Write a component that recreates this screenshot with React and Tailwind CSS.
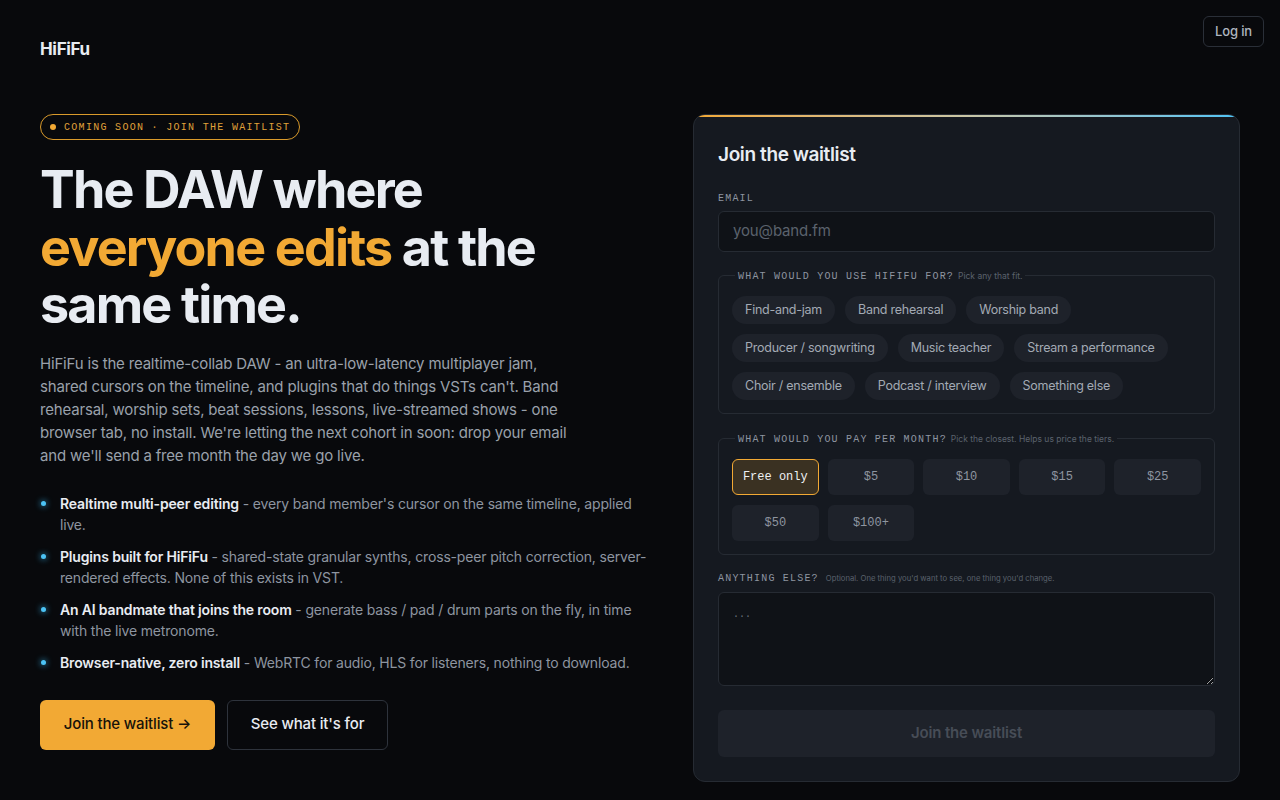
import React from "react";

const mono = { fontFamily: '"Liberation Mono", "DejaVu Sans Mono", monospace' };

const uses = [
  ["Find-and-jam", "Band rehearsal", "Worship band"],
  ["Producer / songwriting", "Music teacher", "Stream a performance"],
  ["Choir / ensemble", "Podcast / interview", "Something else"],
];
const prices = ["Free only", "$5", "$10", "$15", "$25", "$50", "$100+"];

const features = [
  ["Realtime multi-peer editing", "every band member's cursor on the same timeline, applied live."],
  ["Plugins built for HiFiFu", "shared-state granular synths, cross-peer pitch correction, server-rendered effects. None of this exists in VST."],
  ["An AI bandmate that joins the room", "generate bass / pad / drum parts on the fly, in time with the live metronome."],
  ["Browser-native, zero install", "WebRTC for audio, HLS for listeners, nothing to download."],
];

export default function App() {
  return (
    <div
      className="relative min-h-screen bg-[#08090c] text-[#e8ecf2]"
      style={{ fontFamily: 'Inter, "Noto Sans", sans-serif' }}
    >
      <button className="absolute right-4 top-4 h-[31px] rounded-md border border-[#2a2f38] px-[11px] text-[13px] font-medium tracking-[-0.01em] text-[#aeb5bf]">
        Log in
      </button>
      <header className="flex h-[98px] items-center px-10 pt-[2px]">
        <div className="text-[17px] font-bold tracking-[-0.02em] text-[#e8ecf2]">HiFiFu</div>
      </header>

      <main className="flex justify-between px-10 pt-[16px]">
        <section className="w-[600px]">
          <div className="flex h-[26px] w-fit items-center gap-2 rounded-full border border-[#d99a2b] px-[9px] text-[10px] uppercase tracking-[0.13em] text-[#e0a23a]" style={mono}>
            <span className="h-[6px] w-[6px] rounded-full bg-[#f2a934]" />
            <span>Coming soon · Join the waitlist</span>
          </div>

          <h1 className="mt-[21px] text-[52px] font-bold leading-[57.5px] tracking-[-0.035em] text-[#e8ecf2]">
            The DAW where
            <br />
            <span className="text-[#f2a934]">everyone edits</span> at the
            <br />
            same time.
          </h1>

          <p className="mt-[18px] w-[545px] text-[15px] leading-[23px] tracking-[-0.012em] text-[#9aa1ab]">
            HiFiFu is the realtime-collab DAW - an ultra-low-latency multiplayer jam, shared cursors on the timeline, and plugins that do things VSTs can't. Band rehearsal, worship sets, beat sessions, lessons, live-streamed shows - one browser tab, no install. We're letting the next cohort in soon: drop your email and we'll send a free month the day we go live.
          </p>

          <ul className="mt-[26px] flex w-[614px] flex-col gap-[11px]">
            {features.map(([b, t]) => (
              <li key={b} className="relative pl-5 text-[14px] leading-[21px] tracking-[-0.012em] text-[#8e95a0]">
                <span className="absolute left-[1px] top-[8px] h-[5px] w-[5px] rounded-full bg-[#4cc3f5] shadow-[0_0_6px_#38bdf8]" />
                <span className="font-semibold text-[#e8ecf2]">{b}</span> - {t}
              </li>
            ))}
          </ul>

          <div className="mt-[27px] flex gap-3">
            <button className="h-[50px] w-[175px] rounded-md bg-[#f2a934] text-[15px] font-medium tracking-[-0.01em] text-[#17120a]">
              Join the waitlist →
            </button>
            <button className="h-[50px] w-[161px] rounded-md border border-[#2e333c] text-[15px] font-medium tracking-[-0.01em] text-[#e8ecf2]">
              See what it's for
            </button>
          </div>
        </section>

        <section className="relative mt-0 w-[547px] overflow-hidden rounded-xl border border-[#262b33] bg-[#151920] px-6 pb-6 pt-[27px]">
          <div className="absolute left-0 right-0 top-0 h-[2px] bg-gradient-to-r from-[#f2a934] via-[#c9c6a6] to-[#4cc3f5]" />
          <h2 className="text-[19px] font-semibold leading-[26px] tracking-[-0.02em] text-[#e8ecf2]">Join the waitlist</h2>

          <div className="mt-[24px] text-[10px] uppercase leading-[14px] tracking-[0.12em] text-[#8e95a0]" style={mono}>Email</div>
          <div className="mt-[5px] flex h-[41px] items-center rounded-md border border-[#262b33] bg-[#0f1217] px-[14px] text-[15px] tracking-[-0.01em] text-[#5b626d]">
            you@band.fm
          </div>

          <fieldset className="mt-[15px] rounded-md border border-[#262b33] px-[13px] pb-[13px] pt-[13px]">
            <legend className="ml-[3px] px-[3px] leading-[12px]">
              <span className="text-[10px] uppercase tracking-[0.12em] text-[#8e95a0]" style={mono}>What would you use HiFiFu for?</span>
              <span className="ml-1 text-[8.5px] text-[#5b626d]">Pick any that fit.</span>
            </legend>
            <div className="flex flex-col gap-[10px]">
              {uses.map((row, i) => (
                <div key={i} className="flex gap-[10px]">
                  {row.map((u) => (
                    <span key={u} className="flex h-[28px] items-center rounded-full bg-[#1e222a] px-[13px] text-[12.5px] tracking-[-0.02em] text-[#a3aab4]">
                      {u}
                    </span>
                  ))}
                </div>
              ))}
            </div>
          </fieldset>

          <fieldset className="mt-[16px] rounded-md border border-[#262b33] px-[13px] pb-[13px] pt-[13px]">
            <legend className="ml-[3px] px-[3px] leading-[12px]">
              <span className="text-[10px] uppercase tracking-[0.12em] text-[#8e95a0]" style={mono}>What would you pay per month?</span>
              <span className="ml-1 text-[8.5px] text-[#5b626d]">Pick the closest. Helps us price the tiers.</span>
            </legend>
            <div className="grid grid-cols-5 gap-[9px] gap-y-[10px]">
              {prices.map((p, i) => (
                <div
                  key={p}
                  className={
                    i === 0
                      ? "flex h-[36px] items-center justify-center rounded-md border border-[#f2a934] bg-[#3a3122] text-[12px] text-[#eef0f3]"
                      : "flex h-[36px] items-center justify-center rounded-md border border-transparent bg-[#1e222a] text-[12px] text-[#8e95a0]"
                  }
                  style={mono}
                >
                  {p}
                </div>
              ))}
            </div>
          </fieldset>

          <div className="mt-[17px] flex items-baseline gap-[7px] leading-[14px]">
            <span className="text-[10px] uppercase tracking-[0.12em] text-[#8e95a0]" style={mono}>Anything else?</span>
            <span className="text-[7.7px] text-[#5b626d]">Optional. One thing you'd want to see, one thing you'd change.</span>
          </div>
          <textarea
            className="mt-[6px] block h-[94px] w-full resize-y rounded-md border border-[#262b33] bg-[#0f1217] px-[14px] py-[14px] text-[10px] text-[#8e95a0] placeholder:text-[#6b727c] outline-none"
            style={mono}
            placeholder="..."
          />

          <button className="mt-[24px] h-[47px] w-full rounded-md bg-[#1e222a] text-[15px] font-semibold tracking-[-0.01em] text-[#474d57]">
            Join the waitlist
          </button>
        </section>
      </main>
    </div>
  );
}
